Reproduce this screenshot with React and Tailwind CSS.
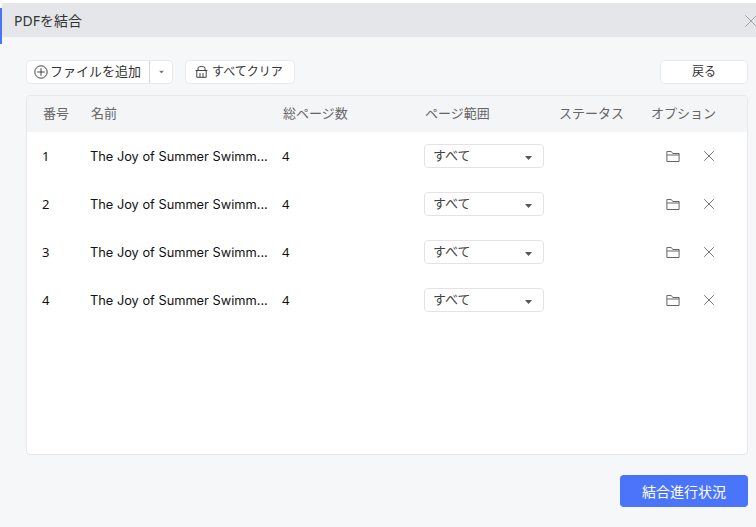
import { X } from 'lucide-react';

const rows = [1, 2, 3, 4];

function Caret({ className }) {
  return (
    <svg width="7" height="4" viewBox="0 0 7 4" className={className}>
      <path d="M0 0h7L3.5 4z" fill="currentColor" />
    </svg>
  );
}

function PlusCircle() {
  return (
    <svg width="14" height="14" viewBox="0 0 14 14" fill="none" stroke="#444" strokeWidth="1">
      <circle cx="7" cy="7" r="6.2" />
      <path d="M7 3.2v7.6M3.2 7h7.6" />
    </svg>
  );
}

function BasketIcon() {
  return (
    <svg width="13" height="13" viewBox="0 0 13 13" fill="none" stroke="#444" strokeWidth="1" className="-mt-[2px] -ml-[1px]">
      <path d="M.6 5.5h11.8M1.8 5.5v6.8h9.4V5.5M3 5.5V2.6c1.2-1.5 5.8-1.5 7 0v2.9M5 8v4.2M8 8v4.2" />
    </svg>
  );
}

function FolderIcon() {
  return (
    <svg width="14" height="13" viewBox="0 0 14 13" fill="none" stroke="#666" strokeWidth="1">
      <path d="M.9 11.5V1.5h4.4l1.5 2h6.3v8zM.9 5h12.2" />
    </svg>
  );
}

function Row({ n }) {
  return (
    <div className="grid grid-cols-[48px_192px_142px_134px_93px_1fr] h-12 items-center pl-[15px] text-[13px] text-[#111]">
      <div className="pt-[1px]">{n}</div>
      <div className="pt-[1px] font-['Inter',sans-serif] text-[12.8px] whitespace-nowrap">The Joy of Summer Swimm...</div>
      <div className="pt-[1px]">4</div>
      <div className="w-[120px] h-6 rounded-[4px] border border-[#e1e3e6] bg-white flex items-center justify-between pl-[8px] pr-[11px] text-[#444]">
        <span>すべて</span>
        <Caret className="text-[#555] mt-[3px]" />
      </div>
      <div />
      <div className="flex items-center pl-[15px] gap-[20px]">
        <FolderIcon />
        <X size={18} strokeWidth={0.9} className="text-[#333]" />
      </div>
    </div>
  );
}

export default function App() {
  return (
    <div className="w-[756px] h-[527px] overflow-hidden flex bg-[#f5f7f9] font-['Noto_Sans','Noto_Sans_CJK_JP',sans-serif]">
      <div className="w-[2px] shrink-0 pt-2">
        <div className="h-9 bg-[#4a74f5]" />
      </div>
      <div className="flex-1 flex flex-col min-w-0">
        <div className="h-[3px] bg-white" />
        <div className="h-[34px] bg-[#e4e6e9] flex items-center justify-between pl-3 pt-[1px] text-[14px] text-[#333]">
          <span>PDFを結合</span>
          <X size={22} strokeWidth={0.8} className="text-[#888] -mr-[6px]" />
        </div>
        <div className="flex-1 flex flex-col pl-6 pr-2 pt-[23px]">
          <div className="flex items-center h-6 text-xs text-[#333]">
            <div className="flex h-6 rounded-[4px] border border-[#e8eaed] bg-white">
              <div className="flex items-center w-[123px] pl-[7px] gap-[2px] border-r border-[#d5d7da] text-[13px]">
                <PlusCircle />
                <span className="whitespace-nowrap">ファイルを追加</span>
              </div>
              <div className="w-[22px] flex items-center justify-center">
                <Caret className="text-[#777] scale-75" />
              </div>
            </div>
            <div className="ml-3 h-6 w-[110px] rounded-[4px] border border-[#e8eaed] bg-white flex items-center pl-[10px] gap-[4px]">
              <BasketIcon />
              <span>すべてクリア</span>
            </div>
            <div className="ml-auto h-6 w-[88px] rounded-[4px] border border-[#e8eaed] bg-white flex items-center justify-center">戻る</div>
          </div>
          <div className="mt-[11px] h-[360px] rounded-[4px] border border-[#e6e8eb] bg-white overflow-hidden">
            <div className="grid grid-cols-[48px_192px_142px_134px_93px_1fr] h-9 items-center pl-[15px] bg-[#f3f5f7] text-[13px] text-[#666]">
              <div className="pl-[1px]">番号</div>
              <div className="pl-[1px]">名前</div>
              <div className="pl-[1px]">総ページ数</div>
              <div className="pl-[1px]">ページ範囲</div>
              <div className="pl-[1px]">ステータス</div>
              <div>オプション</div>
            </div>
            {rows.map((n) => (
              <Row key={n} n={n} />
            ))}
          </div>
          <div className="flex justify-end mt-5">
            <button className="w-[128px] h-8 rounded-[4px] bg-[#4a74fa] text-white text-[14px]">結合進行状況</button>
          </div>
        </div>
      </div>
    </div>
  );
}
